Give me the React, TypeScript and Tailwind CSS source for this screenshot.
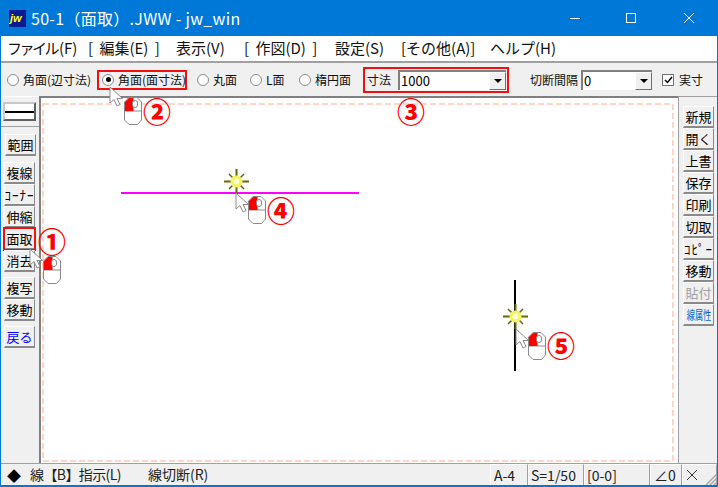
import type { ReactNode } from 'react';

const uiFont = 'font-["Noto_Sans_CJK_JP","Noto_Sans",sans-serif]';

function Mouse({ x, y }: { x: number; y: number }) {
  return (
    <svg className="absolute z-20" style={{ left: x, top: y }} width="18" height="28" viewBox="0 0 18 28">
      <path d="M5 .5h8l4.500 4.500v18l-4 4.500H5l-4.500-4.500V5z" fill="#fff" stroke="#8a8a8a" />
      <path d="M.5 14h17" stroke="#8a8a8a" />
      <path d="M5 1h4.500v13H1V5z" fill="#fe0000" />
      <rect x="8.500" y="3.500" width="5" height="7" rx="2.500" fill="#fff" stroke="#8a8a8a" />
    </svg>
  );
}

function Cursor({ x, y }: { x: number; y: number }) {
  return (
    <svg className="absolute z-20" style={{ left: x, top: y }} width="15" height="22" viewBox="0 0 15 22">
      <path d="M1 1v16l4-3.500 3 6.500 3-1.500-3-6h5.500z" fill="#fff" stroke="#8c8c8c" />
    </svg>
  );
}

function Marker({ x, y }: { x: number; y: number }) {
  return (
    <svg className="absolute z-10" style={{ left: x, top: y }} width="25" height="25" viewBox="0 0 25 25">
      <path d="M12.500 0v25M0 12.500h25" stroke="#66660c" strokeWidth="2" />
      <path d="M5 5l15 15M20 5L5 20" stroke="#66660c" strokeWidth="1.500" />
      <circle cx="12.500" cy="12.500" r="6" fill="#f4f460" />
      <circle cx="12.500" cy="12.500" r="3" fill="#ffffd0" />
    </svg>
  );
}

function Num({ x, y, children }: { x: number; y: number; children: ReactNode }) {
  return (
    <span className={`absolute z-20 text-[28px] leading-[28px] font-black text-[#fe0000] ${uiFont}`} style={{ left: x, top: y }}>
      {children}
    </span>
  );
}

function ToolButton({ label, className = 'text-[13px] text-black' }: { label: ReactNode; className?: string }) {
  return (
    <div className={`flex h-[22px] w-[31px] shrink-0 items-center justify-center overflow-hidden border-t border-l border-t-white border-l-white border-b-2 border-r border-b-[#8a8a8a] border-r-[#8a8a8a] bg-[#f0f0f0] leading-none whitespace-nowrap ${className}`}>
      {label}
    </div>
  );
}

function Radio({ label, checked = false, className = '' }: { label: string; checked?: boolean; className?: string }) {
  return (
    <div className={`flex items-center gap-[4px] text-[12px] whitespace-nowrap text-[#111] ${className}`}>
      <span className="flex h-[12px] w-[12px] shrink-0 items-center justify-center rounded-full border border-[#8a8a8a] bg-white">
        {checked && <span className="h-[5px] w-[5px] rounded-full bg-black" />}
      </span>
      {label}
    </div>
  );
}

function Combo({ value, className = '' }: { value: string; className?: string }) {
  return (
    <div className={`flex h-[20px] items-stretch border-t-2 border-l-2 border-t-[#808080] border-l-[#808080] bg-white ${className}`}>
      <span className="flex-1 pl-[1px] text-[13px] leading-[17px] text-black">{value}</span>
      <span className="flex w-[17px] items-center justify-center border-t border-l border-white border-b border-r border-b-[#707070] border-r-[#707070] bg-[#f0f0f0]">
        <span className="h-0 w-0 border-x-[4px] border-t-[4px] border-x-transparent border-t-black" />
      </span>
    </div>
  );
}

function StatusCell({ children, className = '' }: { children: ReactNode; className?: string }) {
  return (
    <div className={`flex h-full items-center border-t border-l border-r border-t-white border-l-white border-r-[#a0a0a0] text-[14px] text-[#222] ${className}`}>
      {children}
    </div>
  );
}

export default function App() {
  return (
    <div className={`relative flex h-[487px] w-[718px] flex-col overflow-hidden border-x border-b-2 border-[#0078d7] bg-[#f0f0f0] ${uiFont}`}>
      {/* title bar */}
      <div className="flex h-[36px] shrink-0 items-center bg-[#0078d7] pl-[8px] text-white">
        <svg width="17" height="17" viewBox="0 0 17 17">
          <rect width="17" height="17" fill="#0a1a90" />
          <text x="1" y="12" fontSize="11" fontWeight="bold" fontStyle="italic" fontFamily="Liberation Sans" fill="#ffff20">jw</text>
        </svg>
        <span className="ml-[5px] text-[16px] leading-none tracking-[0.3px]">50-1（面取）.JWW - jw_win</span>
        <div className="ml-auto flex items-center">
          <span className="mr-[46px] h-px w-[10px] bg-white" />
          <span className="mr-[48px] h-[10px] w-[10px] border border-white" />
          <svg className="mr-[23px]" width="10" height="10" viewBox="0 0 10 10">
            <path d="M0 0l10 10M10 0L0 10" stroke="#fff" />
          </svg>
        </div>
      </div>

      {/* menu */}
      <div className="flex h-[27px] shrink-0 items-center border-b-2 border-[#a0a0a0] bg-white pl-[6px] text-[15px] whitespace-nowrap text-[#111]">
        <span className="w-[81px]"><span className="tracking-[-2.5px]">ファイル</span><span className="ml-[2px]">(F)</span></span>
        <span className="w-[88px] [word-spacing:3px]">[ 編集(E) ]</span>
        <span className="w-[68px]">表示(V)</span>
        <span className="w-[91px] [word-spacing:3px]">[ 作図(D) ]</span>
        <span className="w-[66px]">設定(S)</span>
        <span className="w-[89px]">[その他(A)]</span>
        <span>ヘルプ(H)</span>
      </div>

      {/* option bar */}
      <div className="flex h-[33px] shrink-0 items-center pl-[6px]">
        <Radio label="角面(辺寸法)" className="w-[90px]" />
        <div className="flex h-[20px] w-[90px] items-center border-2 border-[#f01010] pl-[3px]">
          <Radio label="角面(面寸法)" checked />
        </div>
        <Radio label="丸面" className="ml-[10px] w-[53px]" />
        <Radio label="L面" className="w-[49px]" />
        <Radio label="楕円面" className="w-[64px]" />
        <div className="flex h-[26px] w-[146px] items-center border-2 border-[#f01010] pl-[2px]">
          <span className="w-[31px] text-[12px] text-[#111]">寸法</span>
          <Combo value="1000" className="w-[108px]" />
        </div>
        <span className="ml-[21px] w-[51px] text-[12px] whitespace-nowrap text-[#111]">切断間隔</span>
        <Combo value="0" className="w-[71px]" />
        <span className="ml-[10px] flex h-[12px] w-[12px] items-center justify-center border border-[#707070] bg-white">
          <svg width="9" height="8" viewBox="0 0 9 8">
            <path d="M1 4l2.500 2.500L8 1" fill="none" stroke="#000" strokeWidth="1.500" />
          </svg>
        </span>
        <span className="ml-[5px] text-[12px] text-[#111]">実寸</span>
      </div>

      {/* body */}
      <div className="flex min-h-0 flex-1">
        <div className="flex w-[38px] shrink-0 flex-col border-t border-white pl-[2px]">
          <div className="mt-[5px] flex h-[19px] w-[33px] items-center border-t-2 border-l-2 border-b-2 border-r-2 border-t-[#c8c8c8] border-l-[#c8c8c8] border-r-[#606060] border-b-[#606060] bg-white">
            <span className="h-[2px] w-full bg-black" />
          </div>
          <div className="mt-[5px] -ml-[2px] h-px w-[38px] bg-[#a0a0a0]" />
          <div className="mt-[7px] flex flex-col items-start pl-[1px]">
            <ToolButton label="範囲" className="ml-[1px] w-[30px] text-[13px] text-black" />
            <ToolButton label="複線" className="mt-[6px] text-[13px] text-black" />
            <ToolButton label="ｺｰﾅｰ" className="text-[13px] tracking-[1px] text-black" />
            <ToolButton label="伸縮" />
            <ToolButton label="面取" className="text-[13px] text-black outline-2 -outline-offset-1 outline-[#f01010]" />
            <ToolButton label="消去" />
            <ToolButton label="複写" className="mt-[5px] text-[13px] text-black" />
            <ToolButton label="移動" />
            <ToolButton label="戻る" className="mt-[5px] text-[13px] text-[#0000ff]" />
          </div>
        </div>

        <div className="relative min-w-0 flex-1 border-t-2 border-l-2 border-t-[#808080] border-l-[#808080] bg-white">
          <svg className="absolute top-[5px] left-[1px]" width="632" height="359">
            <rect x="1" y="1" width="630" height="357" fill="none" stroke="#ffc8b4" strokeWidth="1.500" strokeDasharray="6 3" />
          </svg>
          <div className="absolute top-[94px] left-[80px] h-[2px] w-[238px] bg-[#ff00ff]" />
          <div className="absolute top-[182px] left-[473px] h-[91px] w-[2px] bg-black" />
        </div>

        <div className="flex w-[39px] shrink-0 flex-col border-t border-l border-t-[#a0a0a0] border-l-[#a0a0a0] pt-[9px] pl-[4px]">
          <ToolButton label="新規" />
          <ToolButton label="開く" />
          <ToolButton label="上書" />
          <ToolButton label="保存" />
          <ToolButton label="印刷" />
          <ToolButton label="切取" />
          <ToolButton label="ｺﾋﾟｰ" className="text-[13px] tracking-[1px] text-black" />
          <ToolButton label="移動" />
          <ToolButton label="貼付" className="text-[13px] text-[#a0a0a0]" />
          <ToolButton label={<span className="inline-block scale-x-[0.68] text-[12px]">線属性</span>} className="text-[#0066cc]" />
        </div>
      </div>

      {/* status bar */}
      <div className="flex h-[22px] shrink-0 items-center border-t border-[#a0a0a0] text-[14px] text-[#222]">
        <span className="ml-[6px] w-[23px] text-[14px] leading-none text-black">◆</span>
        <span className="w-[118px] tracking-[-0.6px] whitespace-nowrap">線【B】指示(L)</span>
        <span className="whitespace-nowrap">線切断(R)</span>
        <div className="relative ml-auto flex h-full">
          <StatusCell className="w-[38px] pl-[3px]">A-4</StatusCell>
          <StatusCell className="w-[56px] pl-[2px]">S=1/50</StatusCell>
          <StatusCell className="w-[66px] pl-[2px]">[0-0]</StatusCell>
          <StatusCell className="w-[32px] pl-[3px]">∠0</StatusCell>
          <StatusCell className="w-[35px] pl-[4px]">
            <svg width="10" height="10" viewBox="0 0 10 10">
              <path d="M0 0l10 10M10 0L0 10" stroke="#333" />
            </svg>
          </StatusCell>
          <svg className="absolute right-0 bottom-0" width="12" height="12" viewBox="0 0 12 12">
            <path d="M12 1L1 12M12 5l-7 7M12 9l-3 3" stroke="#a8a8a8" strokeWidth="1.500" />
          </svg>
        </div>
      </div>

      {/* annotations drawn over the window */}
      <Cursor x={108} y={86} />
      <Mouse x={123} y={97} />
      <Num x={142} y={97}>②</Num>
      <Num x={396} y={97}>③</Num>
      <Cursor x={28} y={248} />
      <Mouse x={42} y={256} />
      <Num x={37} y={227}>①</Num>
      <Marker x={223} y={169} />
      <Cursor x={234} y={192} />
      <Mouse x={247} y={196} />
      <Num x={266} y={196}>④</Num>
      <Marker x={502} y={304} />
      <Cursor x={514} y={328} />
      <Mouse x={527} y={332} />
      <Num x={546} y={331}>⑤</Num>
    </div>
  );
}
